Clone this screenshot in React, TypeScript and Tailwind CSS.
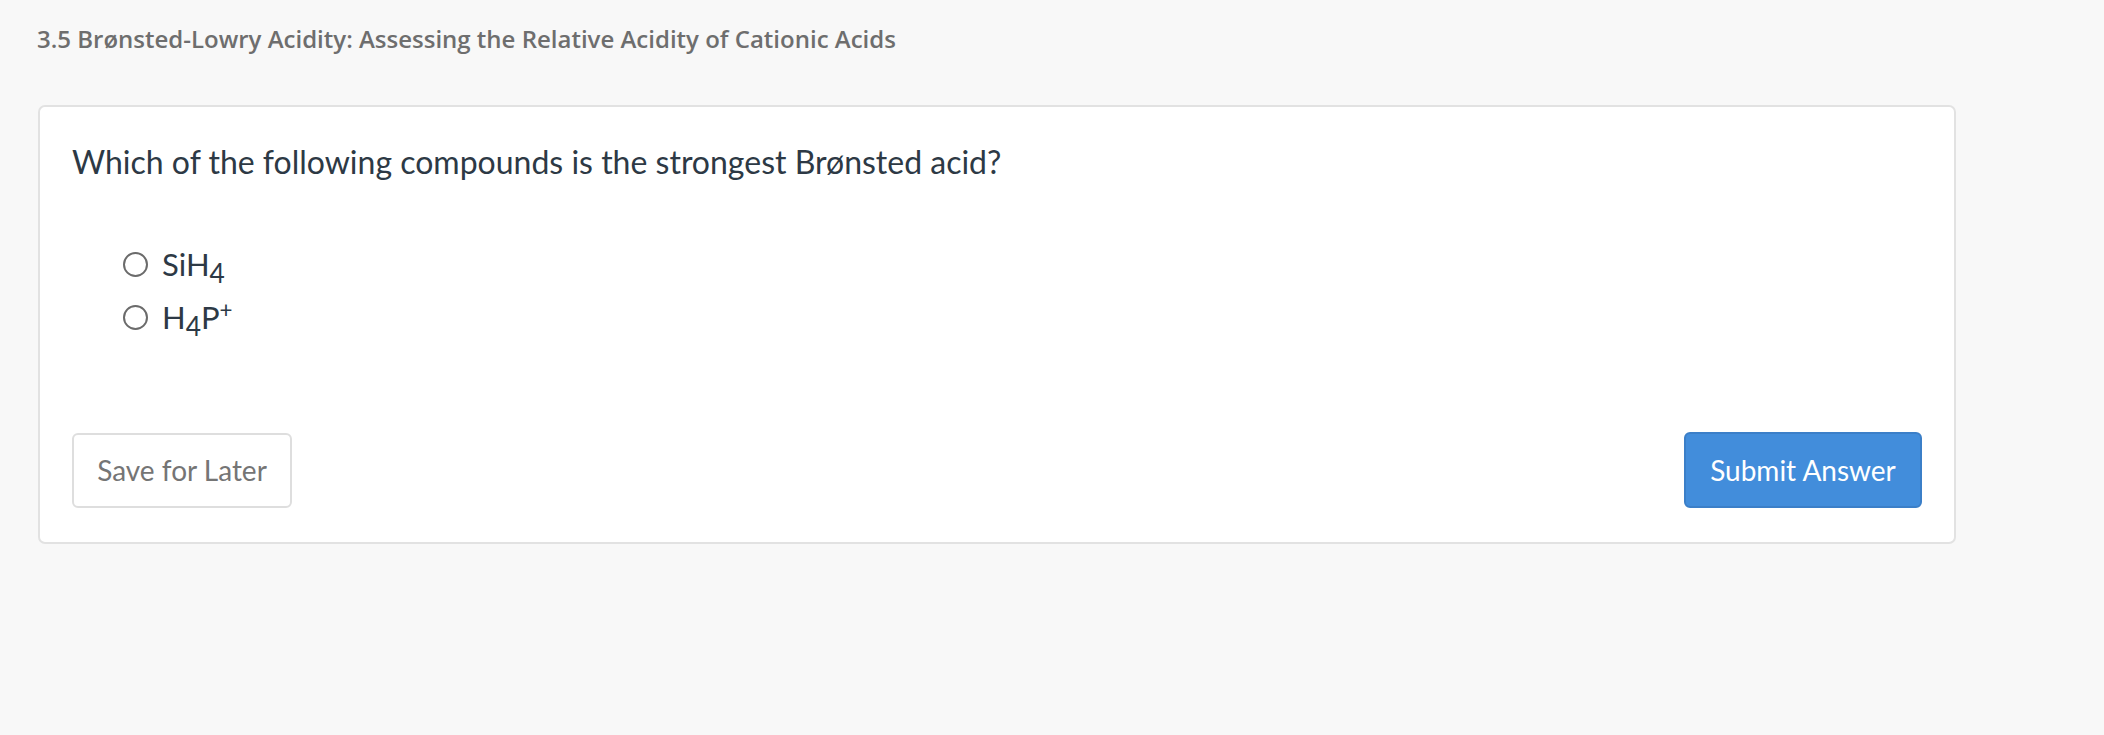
import React, { useState } from 'react';

const options = [
  { id: 'a', label: <>SiH<sub className="relative top-[0.28em] align-baseline text-[0.85em] leading-none">4</sub></> },
  { id: 'b', label: <>H<sub className="relative top-[0.28em] align-baseline text-[0.85em] leading-none">4</sub>P<sup className="relative top-[-0.5em] align-baseline text-[0.72em] leading-none">+</sup></> },
];

export default function App() {
  const [selected, setSelected] = useState<string | null>(null);

  return (
    <div className="min-h-[735px] bg-[#f8f8f8] pl-[37px] pt-[23px]" style={{ fontFamily: 'Lato, "Open Sans", sans-serif' }}>
      <h1 className="text-[24px] font-semibold text-[#6e6e6e] leading-[32px]" style={{ fontFamily: '"Open Sans", sans-serif' }}>
        3.5 Brønsted-Lowry Acidity: Assessing the Relative Acidity of Cationic Acids
      </h1>

      <div className="mt-[50px] ml-px w-[1918px] rounded-[7px] border-2 border-[#e2e2e2] bg-white px-[32px] pt-[34px] pb-[34px]">
        <p className="text-[32px] leading-[42px] text-[#2d3945]">
          Which of the following compounds is the strongest Brønsted acid?
        </p>

        <div className="mt-[62px] flex flex-col gap-[14px] pl-[51px]">
          {options.map((o) => (
            <label key={o.id} className="flex items-center gap-[14px] text-[31px] leading-[39px] text-[#2d3945] cursor-pointer">
              <span className="flex h-[25px] w-[25px] items-center justify-center rounded-full border-2 border-[#6b6b6b]" onClick={() => setSelected(o.id)}>
                {selected === o.id && <span className="h-[11px] w-[11px] rounded-full bg-[#6b6b6b]" />}
              </span>
              <span>{o.label}</span>
            </label>
          ))}
        </div>

        <div className="mt-[95px] flex items-center justify-between">
          <button className="h-[75px] w-[220px] rounded-[6px] border-2 border-[#dedede] bg-white text-[28px] text-[#757575]">
            Save for Later
          </button>
          <button className="h-[76px] w-[238px] rounded-[6px] border-2 border-[#3b7fc8] bg-[#428ddb] text-[28px] text-white">
            Submit Answer
          </button>
        </div>
      </div>
    </div>
  );
}
